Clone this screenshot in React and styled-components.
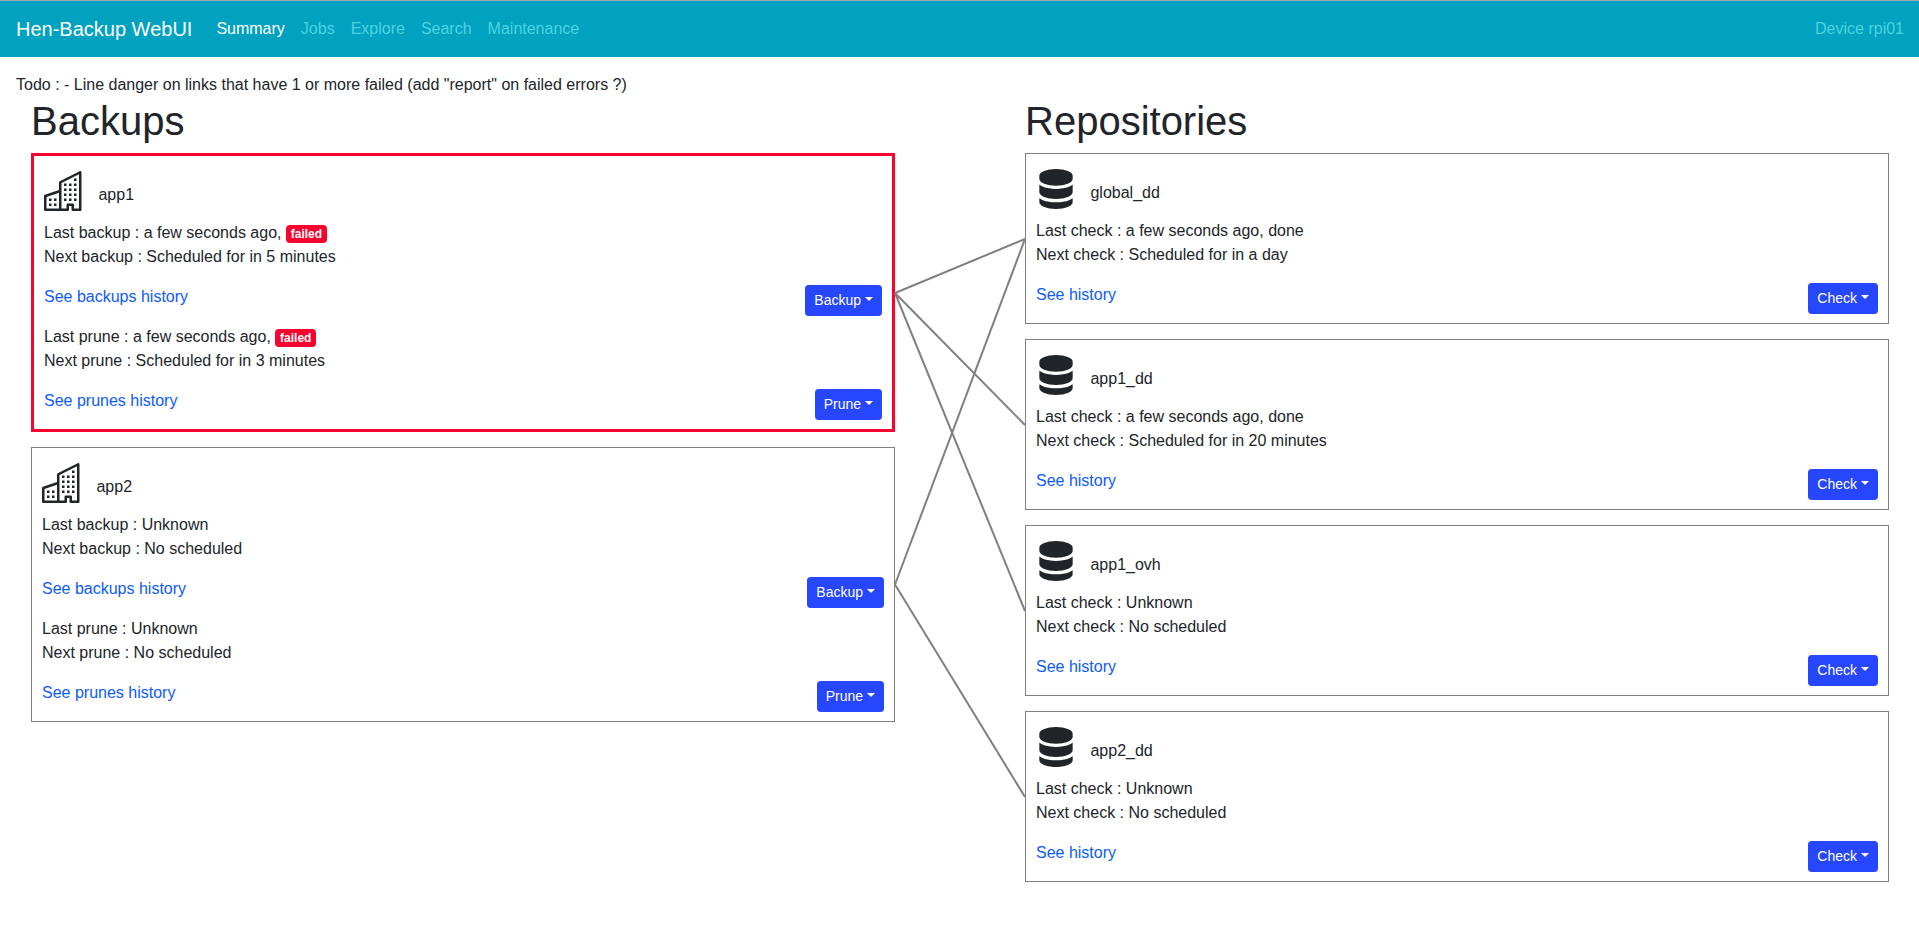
import React from "react";
import styled, { createGlobalStyle } from "styled-components";

const GlobalStyle = createGlobalStyle`
  *, *::before, *::after { box-sizing: border-box; }
  body {
    margin: 0;
    background: #fff;
    color: #212529;
    font-family: "Liberation Sans", Arial, sans-serif;
    font-size: 16px;
    line-height: 1.5;
  }
`;

const Navbar = styled.nav`
  display: flex;
  align-items: center;
  height: 57px;
  padding: 0 15px 0 16px;
  background: #00a2bf;
  border-top: 1px solid #a6a6a6;
`;

const Brand = styled.a`
  margin-right: 16px;
  color: #fff;
  font-size: 20px;
  line-height: 30px;
  white-space: nowrap;
`;

const NavLinks = styled.div`
  display: flex;
  flex: 1;
`;

const NavLink = styled.a`
  padding: 8px;
  color: ${(p) => (p.$active ? "#fff" : "#4dd2e1")};
`;

const DeviceLabel = styled.span`
  color: #4dd2e1;
`;

const Main = styled.main`
  padding: 16px 16px 0;
`;

const Board = styled.div`
  display: grid;
  grid-template-columns: 864px 130px 864px;
  padding-left: 15px;
`;

const Title = styled.h1`
  margin: 0 0 8px;
  font-size: 40px;
  font-weight: 500;
  line-height: 48px;
`;

const CardList = styled.div`
  display: flex;
  flex-direction: column;
  gap: 15px;
`;

const Card = styled.section`
  padding: 0 10px;
  border: ${(p) => (p.$failed ? "3px solid #f7032e" : "1px solid #808080")};
`;

const CardHeader = styled.header`
  display: flex;
  align-items: flex-start;
  gap: 14.45px;
  height: 65px;
  padding-top: 15px;
`;

const CardName = styled.span`
  margin-top: 12px;
`;

const Status = styled.p`
  margin: 0 0 16px;
`;

const StatusLine = styled.span`
  display: block;
  height: 24px;
`;

const Badge = styled.span`
  display: inline-block;
  padding: 3px 4.8px;
  border-radius: 4px;
  background: #f7032e;
  color: #fff;
  font-size: 12px;
  font-weight: 700;
  line-height: 1;
  vertical-align: baseline;
`;

const Actions = styled.div`
  display: flex;
  justify-content: space-between;
  align-items: flex-start;
  height: 24px;
  margin-bottom: 16px;
`;

const HistoryLink = styled.a`
  color: #0d5bff;
`;

const DropdownButton = styled.button`
  margin: 0 0.4px 0 0;
  padding: 4px 8px;
  border: 1px solid #2747ff;
  border-radius: 3.2px;
  background: #2747ff;
  color: #fff;
  font-family: inherit;
  font-size: 14px;
  line-height: 21px;
  white-space: nowrap;

  &::after {
    content: "";
    display: inline-block;
    margin-left: 0.255em;
    vertical-align: 0.255em;
    border-top: 0.3em solid;
    border-right: 0.3em solid transparent;
    border-left: 0.3em solid transparent;
  }
`;

const Links = styled.svg`
  display: block;
  margin-top: 56px;
  overflow: visible;
`;

const BuildingIcon = () => (
  <svg width="40" height="40" viewBox="0 0 16 16" fill="currentColor">
    <path
      fillRule="evenodd"
      d="M14.763.075A.5.5 0 0 1 15 .5v15a.5.5 0 0 1-.5.5h-3a.5.5 0 0 1-.5-.5V14h-1v1.5a.5.5 0 0 1-.5.5h-9a.5.5 0 0 1-.5-.5V10a.5.5 0 0 1 .342-.474L6 7.64V4.5a.5.5 0 0 1 .276-.447l8-4a.5.5 0 0 1 .487.022zM6 8.694L1 10.36V15h5V8.694zM7 15h2v-1.5a.5.5 0 0 1 .5-.5h2a.5.5 0 0 1 .5.5V15h2V1.309l-7 3.5V15z"
    />
    <path d="M2 11h1v1H2v-1zm2 0h1v1H4v-1zm-2 2h1v1H2v-1zm2 0h1v1H4v-1zm4-4h1v1H8V9zm2 0h1v1h-1V9zm-2 2h1v1H8v-1zm2 0h1v1h-1v-1zm2-2h1v1h-1V9zm0 2h1v1h-1v-1zM8 7h1v1H8V7zm2 0h1v1h-1V7zm2 0h1v1h-1V7zM8 5h1v1H8V5zm2 0h1v1h-1V5zm2 0h1v1h-1V5zm0-2h1v1h-1V3z" />
  </svg>
);

const DatabaseIcon = () => (
  <svg width="40" height="40" viewBox="0 0 16 16" fill="currentColor">
    <path d="M1.333 2.667C1.333 1.194 4.318 0 8 0s6.667 1.194 6.667 2.667V4c0 1.473-2.985 2.667-6.667 2.667S1.333 5.473 1.333 4V2.667z" />
    <path d="M1.333 6.334v3C1.333 10.805 4.318 12 8 12s6.667-1.194 6.667-2.667V6.334c-.43.32-.931.58-1.458.79C11.81 7.684 9.967 8 8 8c-1.967 0-3.81-.317-5.21-.876a6.508 6.508 0 0 1-1.457-.79z" />
    <path d="M14.667 11.668c-.43.319-.931.578-1.458.789-1.4.56-3.242.876-5.209.876-1.967 0-3.81-.316-5.21-.876a6.51 6.51 0 0 1-1.457-.79v1.666C1.333 14.806 4.318 16 8 16s6.667-1.194 6.667-2.667v-1.665z" />
  </svg>
);

const navItems = ["Summary", "Jobs", "Explore", "Search", "Maintenance"];

const backups = [
  {
    name: "app1",
    failed: true,
    jobs: [
      { kind: "backup", action: "Backup", last: "a few seconds ago, ", failed: true, next: "Scheduled for in 5 minutes" },
      { kind: "prune", action: "Prune", last: "a few seconds ago, ", failed: true, next: "Scheduled for in 3 minutes" },
    ],
  },
  {
    name: "app2",
    jobs: [
      { kind: "backup", action: "Backup", last: "Unknown", next: "No scheduled" },
      { kind: "prune", action: "Prune", last: "Unknown", next: "No scheduled" },
    ],
  },
];

const repository = (name, last, next) => ({
  name,
  jobs: [{ kind: "check", action: "Check", last, next }],
});

const repositories = [
  repository("global_dd", "a few seconds ago, done", "Scheduled for in a day"),
  repository("app1_dd", "a few seconds ago, done", "Scheduled for in 20 minutes"),
  repository("app1_ovh", "Unknown", "No scheduled"),
  repository("app2_dd", "Unknown", "No scheduled"),
];

// Vertical centres of the cards, measured from the top of the card lists.
const backupY = [140, 431.5];
const repositoryY = [86, 272, 458, 644];
const links = [
  [0, 0],
  [0, 1],
  [0, 2],
  [1, 0],
  [1, 3],
];

const Job = ({ job }) => (
  <>
    <Status>
      <StatusLine>
        Last {job.kind} : {job.last}
        {job.failed && <Badge>failed</Badge>}
      </StatusLine>
      <StatusLine>
        Next {job.kind} : {job.next}
      </StatusLine>
    </Status>
    <Actions>
      <HistoryLink>{job.kind === "check" ? "See history" : `See ${job.kind}s history`}</HistoryLink>
      <DropdownButton>{job.action}</DropdownButton>
    </Actions>
  </>
);

const Column = ({ title, items, icon: Icon }) => (
  <div>
    <Title>{title}</Title>
    <CardList>
      {items.map((item) => (
        <Card key={item.name} $failed={item.failed}>
          <CardHeader>
            <Icon />
            <CardName>{item.name}</CardName>
          </CardHeader>
          {item.jobs.map((job) => (
            <Job key={job.kind} job={job} />
          ))}
        </Card>
      ))}
    </CardList>
  </div>
);

export default function App() {
  return (
    <>
      <GlobalStyle />
      <Navbar>
        <Brand>Hen-Backup WebUI</Brand>
        <NavLinks>
          {navItems.map((item, i) => (
            <NavLink key={item} $active={i === 0}>
              {item}
            </NavLink>
          ))}
        </NavLinks>
        <DeviceLabel>Device rpi01</DeviceLabel>
      </Navbar>
      <Main>
        <div>Todo : - Line danger on links that have 1 or more failed (add "report" on failed errors ?)</div>
        <Board>
          <Column title="Backups" items={backups} icon={BuildingIcon} />
          <Links width="130" height="729">
            {links.map(([from, to]) => (
              <line
                key={`${from}-${to}`}
                x1="0"
                y1={backupY[from]}
                x2="130"
                y2={repositoryY[to]}
                stroke="#808080"
                strokeWidth="2"
              />
            ))}
          </Links>
          <Column title="Repositories" items={repositories} icon={DatabaseIcon} />
        </Board>
      </Main>
    </>
  );
}
